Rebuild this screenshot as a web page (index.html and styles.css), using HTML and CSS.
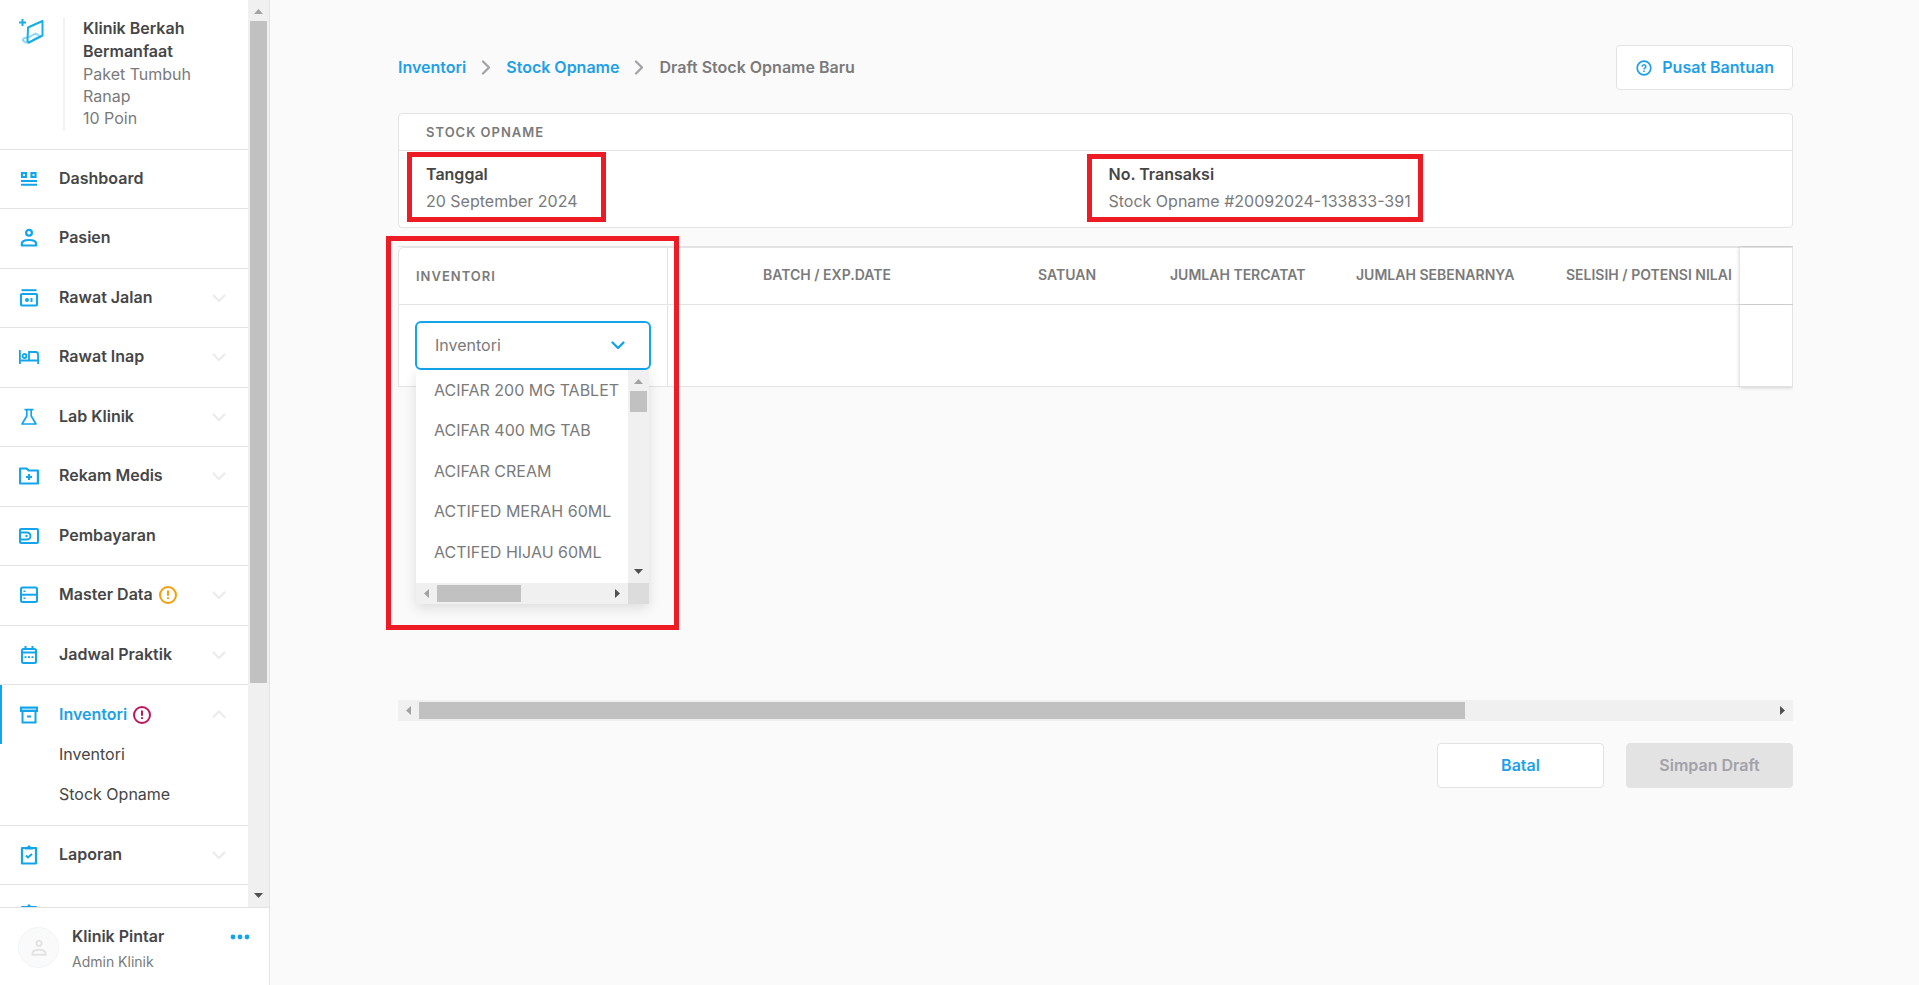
FILE: index.html
```html
<!DOCTYPE html>
<html lang="id">
<head>
<meta charset="utf-8">
<title>Draft Stock Opname Baru</title>
<link rel="stylesheet" href="styles.css">
</head>
<body>
<svg class="defs" aria-hidden="true">
  <symbol id="down" viewBox="0 0 16 16"><path d="M2.5 5.500 8 11l5.500-5.500" fill="none" stroke="currentColor" stroke-width="2.400" stroke-linecap="round" stroke-linejoin="round"/></symbol>
  <symbol id="up" viewBox="0 0 16 16"><path d="M2.500 11 8 5.500l5.500 5.500" fill="none" stroke="currentColor" stroke-width="2.400" stroke-linecap="round" stroke-linejoin="round"/></symbol>
  <symbol id="right" viewBox="0 0 16 16"><path d="M5 2.500 11 8.500 5 14.500" fill="none" stroke="currentColor" stroke-width="2.200" stroke-linecap="round" stroke-linejoin="round"/></symbol>
  <symbol id="alert" viewBox="0 0 18 18"><circle cx="9" cy="9" r="8" fill="none" stroke="currentColor" stroke-width="2"/><path d="M9 4.500v5.300M9 11.300v1.800" stroke="currentColor" stroke-width="2"/></symbol>
  <symbol id="person" viewBox="0 0 20 20"><g fill="none" stroke="currentColor" stroke-width="2.200"><circle cx="10" cy="4.800" r="2.900"/><path d="M2.800 17.500v-1.500c0-2.500 3-4 7.200-4s7.200 1.500 7.200 4v1.500z" stroke-linejoin="round"/></g></symbol>
  <symbol id="clip" viewBox="0 0 20 20"><path d="M3 3h14v15.500H3z" fill="none" stroke="currentColor" stroke-width="2.200" stroke-linejoin="round"/><path d="M6 4.500V2h2l2-2 2 2h2v2.500z" fill="currentColor"/><path d="m7 10.500 2 2 4-3.500" fill="none" stroke="currentColor" stroke-width="2"/></symbol>
</svg>
<div class="app">
  <aside class="sidebar">
    <div class="side-scroll">
      <div class="side-content">
        <header class="clinic">
          <svg class="logo" viewBox="0 0 26 26"><g fill="none" stroke="#16aee8" stroke-width="2" stroke-linejoin="round"><path d="M9 18.500c-3 0-6 1.500-5 3s3 2 5.500 2.500l6-4 6-2.500-5-3-7 4" opacity=".5"/><path d="M9 8.500 23.500 2v14.500L10 23.500 8.500 22z"/><path d="M3.500 0v7M0 3.500h7"/></g></svg>
          <div class="clinic-text">
            <strong>Klinik Berkah Bermanfaat</strong>
            <p>Paket Tumbuh Ranap</p>
            <p>10 Poin</p>
          </div>
        </header>
        <ul class="menu">
          <li><a href="#"><svg viewBox="0 0 20 20"><g fill="none" stroke="currentColor" stroke-width="2.200"><path d="M3 4h4v4H3zM12.500 4h4v4h-4z"/><path d="M2 12h16M2 15.700h16" stroke-width="2"/></g></svg><span>Dashboard</span></a></li>
          <li><a href="#"><svg><use href="#person"/></svg><span>Pasien</span></a></li>
          <li><a href="#"><svg viewBox="0 0 20 20"><g fill="none" stroke="currentColor" stroke-width="2.200"><path d="M2.500 2.200h15" stroke-width="2"/><rect x="2" y="6" width="16" height="11.500" rx="1"/></g><circle cx="8" cy="12" r="2" fill="currentColor"/><path d="M11.500 10h2v4h-2z" fill="currentColor"/></svg><span>Rawat Jalan</span></a><svg class="chev"><use href="#down"/></svg></li>
          <li><a href="#"><svg viewBox="0 0 20 20"><g fill="none" stroke="currentColor" stroke-width="1.800"><path d="M.9 3v14M.9 13.500h18.200V17M19.100 13.500V7.500c0-1.500-1-2.500-2.500-2.500H10v8.500"/><circle cx="5.500" cy="9" r="2"/></g></svg><span>Rawat Inap</span></a><svg class="chev"><use href="#down"/></svg></li>
          <li><a href="#"><svg viewBox="0 0 20 20"><path d="M5.500 2.700h9M7.800 3v6L3 17h14l-4.800-8V3" fill="none" stroke="currentColor" stroke-width="1.700" stroke-linejoin="round"/></svg><span>Lab Klinik</span></a><svg class="chev"><use href="#down"/></svg></li>
          <li><a href="#"><svg viewBox="0 0 20 20"><path d="M1.100 2.500h6.500l2 2h9.300v13H1.100z" fill="none" stroke="currentColor" stroke-width="2.200" stroke-linejoin="round"/><path d="M10 8v6M7 11h6" stroke="currentColor" stroke-width="2.200"/></svg><span>Rekam Medis</span></a><svg class="chev"><use href="#down"/></svg></li>
          <li><a href="#"><svg viewBox="0 0 20 20"><g fill="none" stroke="currentColor" stroke-width="2"><rect x="1" y="3" width="18" height="14" rx="1"/><path d="M1 6.500h7a3.500 3.500 0 0 1 0 7H1" /></g><circle cx="7.500" cy="10" r="1.200" fill="currentColor"/></svg><span>Pembayaran</span></a></li>
          <li><a href="#"><svg viewBox="0 0 20 20"><g fill="none" stroke="currentColor" stroke-width="2"><rect x="2" y="2.500" width="16" height="14.500" rx="1.500"/><path d="M2 9.700h16"/></g><path d="M4.500 5.500h2v1.500h-2zM4.500 12.500h2V14h-2z" fill="currentColor"/></svg><span>Master Data</span><svg class="alert amber"><use href="#alert"/></svg></a><svg class="chev"><use href="#down"/></svg></li>
          <li><a href="#"><svg viewBox="0 0 20 20"><g fill="none" stroke="currentColor" stroke-width="2"><rect x="3" y="4" width="14" height="14" rx="1.500"/><path d="M3 7.500h14M6.500 1v3M13.500 1v3" /></g><path d="M5.500 11.300h2v1.600h-2zM9 11.300h2v1.600H9zM12.500 11.300h2v1.600h-2z" fill="currentColor"/></svg><span>Jadwal Praktik</span></a><svg class="chev"><use href="#down"/></svg></li>
          <li class="open"><a href="#"><svg viewBox="0 0 20 20"><g fill="none" stroke="currentColor" stroke-width="2"><path d="M2 2.500h16V6H2zM3.500 6v11.500h13V6"/></g><path d="M2 2.500h16V6H2z" fill="currentColor" opacity=".4"/><path d="M8 10.500h4v2H8z" fill="currentColor"/></svg><span>Inventori</span><svg class="alert ruby"><use href="#alert"/></svg></a><svg class="chev"><use href="#up"/></svg>
            <ul class="submenu"><li><a href="#">Inventori</a></li><li><a href="#">Stock Opname</a></li></ul>
          </li>
          <li><a href="#"><svg><use href="#clip"/></svg><span>Laporan</span></a><svg class="chev"><use href="#down"/></svg></li>
          <li><a href="#"><svg><use href="#clip"/></svg></a></li>
        </ul>
      </div>
      <div class="vbar"><i class="arrow top"></i><div class="vthumb side-thumb"></div><i class="arrow bottom"></i></div>
    </div>
    <footer class="user">
      <div class="avatar"><svg><use href="#person"/></svg></div>
      <div class="user-text"><strong>Klinik Pintar</strong><p>Admin Klinik</p></div>
      <button class="more" aria-label="Menu"><svg viewBox="0 0 20 6"><g fill="currentColor"><circle cx="3" cy="3" r="2.400"/><circle cx="10" cy="3" r="2.400"/><circle cx="17" cy="3" r="2.400"/></g></svg></button>
    </footer>
  </aside>
  <main>
    <div class="topbar">
      <nav class="crumbs">
        <a href="#">Inventori</a><svg><use href="#right"/></svg><a href="#">Stock Opname</a><svg><use href="#right"/></svg><span>Draft Stock Opname Baru</span>
      </nav>
      <button class="btn help"><svg viewBox="0 0 16 16"><circle cx="8" cy="8" r="6.800" fill="none" stroke="currentColor" stroke-width="1.700"/><path d="M6.200 6.700a1.800 1.800 0 1 1 2.700 1.500c-.6.400-.9.600-.9 1.200M8 10.600v1.300" fill="none" stroke="currentColor" stroke-width="1.500"/></svg>Pusat Bantuan</button>
    </div>
    <section class="card">
      <h1>STOCK OPNAME</h1>
      <div class="fields">
        <div class="field"><strong>Tanggal</strong><p>20 September 2024</p><div class="mark mark-date"></div></div>
        <div class="field"><strong>No. Transaksi</strong><p>Stock Opname #20092024-133833-391</p><div class="mark mark-no"></div></div>
      </div>
    </section>
    <section class="items">
      <table>
        <thead><tr><th class="c-item">INVENTORI</th><th class="c-batch">BATCH / EXP.DATE</th><th class="c-unit">SATUAN</th><th class="c-rec">JUMLAH TERCATAT</th><th class="c-real">JUMLAH SEBENARNYA</th><th class="c-diff">SELISIH / POTENSI NILAI</th><th class="c-act"></th></tr></thead>
        <tbody><tr>
          <td class="c-item">
            <div class="picker">
              <select aria-label="Inventori"><option>Inventori</option></select>
              <svg class="pick-chev"><use href="#down"/></svg>
              <div class="list">
                <ul>
                  <li>ACIFAR 200 MG TABLET</li><li>ACIFAR 400 MG TAB</li><li>ACIFAR CREAM</li><li>ACTIFED MERAH 60ML</li><li>ACTIFED HIJAU 60ML</li>
                </ul>
                <div class="vbar"><i class="arrow top"></i><div class="vthumb list-thumb"></div><i class="arrow bottom"></i></div>
                <div class="hbar"><i class="arrow left"></i><div class="hthumb list-hthumb"></div><i class="arrow right"></i></div>
                <div class="corner"></div>
              </div>
            </div>
          </td>
          <td></td><td></td><td></td><td></td><td></td><td class="c-act"></td>
        </tr></tbody>
      </table>
      <div class="mark mark-list"></div>
    </section>
    <div class="hbar page-hbar"><i class="arrow left"></i><div class="hthumb page-thumb"></div><i class="arrow right"></i></div>
    <div class="actions"><button class="btn">Batal</button><button class="btn" disabled>Simpan Draft</button></div>
  </main>
</div>
</body>
</html>
```
FILE: styles.css
```css
* { box-sizing: border-box; margin: 0; padding: 0; }
body { font: 16px/20px Inter, sans-serif; color: #464646; background: #fafafa; }
a { color: inherit; text-decoration: none; }
ul { list-style: none; }
button, select { font: inherit; }
strong { font-weight: 600; }
.defs { display: none; }
.app { display: flex; height: 100vh; }

/* Sidebar */
.sidebar { width: 270px; flex: none; display: flex; flex-direction: column; background: #fff; border-right: 1px solid #e3e3e3; }
.side-scroll { flex: 1; min-height: 0; display: flex; }
.side-content { flex: 1; overflow: hidden; }
.clinic { display: flex; height: 150px; padding: 17px 24px 18px 19px; border-bottom: 1px solid #e3e3e3; }
.logo { width: 26px; height: 26px; margin-top: 2px; flex: none; }
.clinic-text { margin-left: 18px; padding-left: 18px; border-left: 2px solid #f2f2f2; line-height: 22px; }
.clinic-text strong { display: block; line-height: 23px; }
.clinic-text p, .user-text p { color: #7a7a7a; }
.menu > li { position: relative; height: 59px; border-bottom: 1px solid #e3e3e3; }
.menu > li:nth-child(even) { height: 60px; }
.menu > li > a { display: flex; align-items: center; height: 58px; padding-left: 19px; font-weight: 600; }
.menu > li > a > span { padding-bottom: 2px; }
.menu > li > a > svg { width: 20px; height: 20px; margin-right: 20px; color: #12a5eb; }
.menu > li > a > .alert { width: 18px; height: 18px; margin: 0 0 0 6px; }
.menu > li > a > .amber { color: #f59e0b; }
.menu > li > a > .ruby { color: #be185d; }
.chev { position: absolute; right: 21px; top: 21px; width: 16px; height: 16px; color: #ececec; }
.menu > li.open { height: auto; }
.menu > li.open > a { height: 59px; color: #1ea0e8; border-left: 2px solid #12a5eb; padding-left: 17px; }
.submenu { display: grid; gap: 20px; padding: 0 0 21px 59px; }
.user { display: flex; height: 78px; padding: 19px 19px 0 18px; border-top: 1px solid #e3e3e3; }
.avatar { display: grid; place-items: center; width: 41px; height: 41px; border-radius: 50%; border: 1px solid #f0f5f8; background: #fafafa; color: #e3e3e3; }
.avatar svg { width: 18px; height: 18px; }
.user-text { flex: 1; margin-left: 13px; }
.user-text strong { display: block; line-height: 18px; }
.user-text p { font-size: 14px; margin-top: 7px; }
.more { height: 20px; border: 0; background: none; color: #12a5eb; }
.more svg { width: 20px; height: 6px; display: block; }

/* Scrollbars */
.vbar { display: flex; flex-direction: column; width: 21px; background: #f0f0f0; }
.hbar { display: flex; height: 21px; background: #f0f0f0; }
.vthumb { width: 17px; margin: 0 2px; background: #c1c1c1; }
.hthumb { height: 17px; margin: 2px 0; background: #c1c1c1; }
.arrow { width: 21px; height: 21px; flex: none; color: #505050; }
.arrow::after { content: ""; display: block; width: 9px; height: 5px; margin: 9px 6px; background: currentColor; clip-path: polygon(0 0, 100% 0, 50% 100%); }
.arrow.top, .arrow.left { color: #a3a3a3; }
.arrow.top::after { clip-path: polygon(50% 0, 100% 100%, 0 100%); }
.arrow.left::after, .arrow.right::after { width: 5px; height: 9px; margin: 6px 8px; clip-path: polygon(100% 0, 100% 100%, 0 50%); }
.arrow.right::after { clip-path: polygon(0 0, 100% 50%, 0 100%); }
.arrow.bottom { margin-top: auto; }
.arrow.bottom::after { margin-top: 7px; }
.arrow.right { margin-left: auto; }
.side-thumb { height: 73%; }
.list-thumb { height: 21px; }
.list-hthumb { width: 84px; }
.page-thumb { width: 75%; }

/* Main */
main { flex: 1; min-width: 0; padding: 45px 126px 40px 128px; }
.topbar { display: flex; justify-content: space-between; }
.crumbs { display: flex; align-items: center; height: 43px; gap: 12px; font-weight: 600; color: #7a7a7a; }
.crumbs a { color: #1ea0e8; }
.crumbs svg { width: 16px; height: 16px; color: #a1a1a8; }
.btn { min-width: 167px; height: 45px; padding-bottom: 2px; border: 1px solid #e3e3e3; border-radius: 4px; background: #fff; color: #1ea0e8; font-weight: 600; }
.btn:disabled { background: #e3e3e3; color: #a1a1aa; }
.help { display: flex; align-items: center; gap: 10px; padding: 0 18px 2px 19px; }
.help svg { width: 16px; height: 16px; margin-top: 2px; }
.card { margin-top: 23px; border: 1px solid #e3e3e3; border-radius: 4px; background: #fff; }
.card h1 { padding: 8px 27px; border-bottom: 1px solid #e3e3e3; font-size: 13px; font-weight: 600; letter-spacing: 1px; color: #7a7a7a; }
.fields { display: grid; grid-template-columns: 1fr 1fr; gap: 26px; padding: 13px 27px 16px; }
.field { position: relative; }
.field p { margin-top: 7px; color: #7a7a7a; }
.mark { position: absolute; border: 5px solid #ed1c24; pointer-events: none; }
.mark-date { left: -19px; top: -12px; width: 199px; height: 70px; }
.mark-no { left: -22px; top: -10px; width: 336px; height: 68px; }
.mark-list { left: -12px; top: -10px; width: 293px; height: 394px; z-index: 3; }
.items { position: relative; min-height: 454px; margin-top: 18px; }
table { width: 100%; table-layout: fixed; border-collapse: separate; border-spacing: 0; border-top: 1px solid #e3e3e3; }
th, td { background: #fff; border-bottom: 1px solid #e3e3e3; }
th { height: 58px; padding-bottom: 2px; border-top: 1px solid #e3e3e3; font-size: 14px; font-weight: 600; color: #7a7a7a; text-align: left; white-space: nowrap; }
td { height: 82px; vertical-align: top; }
.c-item { width: 270px; border-left: 1px solid #e3e3e3; border-right: 1px solid #e3e3e3; padding-left: 16px; }
th.c-item { padding: 0 0 0 17px; font-size: 13px; letter-spacing: 1px; border-top-left-radius: 6px; }
.c-batch { padding-left: 95px; }
.c-unit { width: 132px; }
.c-rec { width: 186px; }
.c-real { width: 210px; }
.c-diff { width: 174px; }
.c-act { width: 53px; border-right: 1px solid #e3e3e3; box-shadow: 0 0 4px rgba(0, 0, 0, .25); clip-path: inset(-1px 0 -4px -4px); }
.picker { position: relative; width: 236px; margin-top: 16px; }
.picker select { display: block; width: 100%; height: 49px; padding: 0 19px 2px 18px; appearance: none; border: 2px solid #12a5eb; border-radius: 6px; background: #fff; color: #7a7a7a; outline: 0; }
.pick-chev { position: absolute; right: 25px; top: 16px; width: 16px; height: 16px; color: #12a5eb; }
.list { position: absolute; left: 1px; top: 49px; z-index: 2; display: grid; grid-template: 213px 21px / 1fr 21px; width: 233px; background: #fff; box-shadow: 0 4px 12px rgba(0, 0, 0, .12); }
.list li { padding-left: 18px; line-height: 40px; color: #7a7a7a; white-space: nowrap; }
.list li:nth-child(even) { line-height: 41px; }
.corner { background: #dcdcdc; }
.actions { display: flex; justify-content: flex-end; gap: 22px; margin-top: 22px; }
```
